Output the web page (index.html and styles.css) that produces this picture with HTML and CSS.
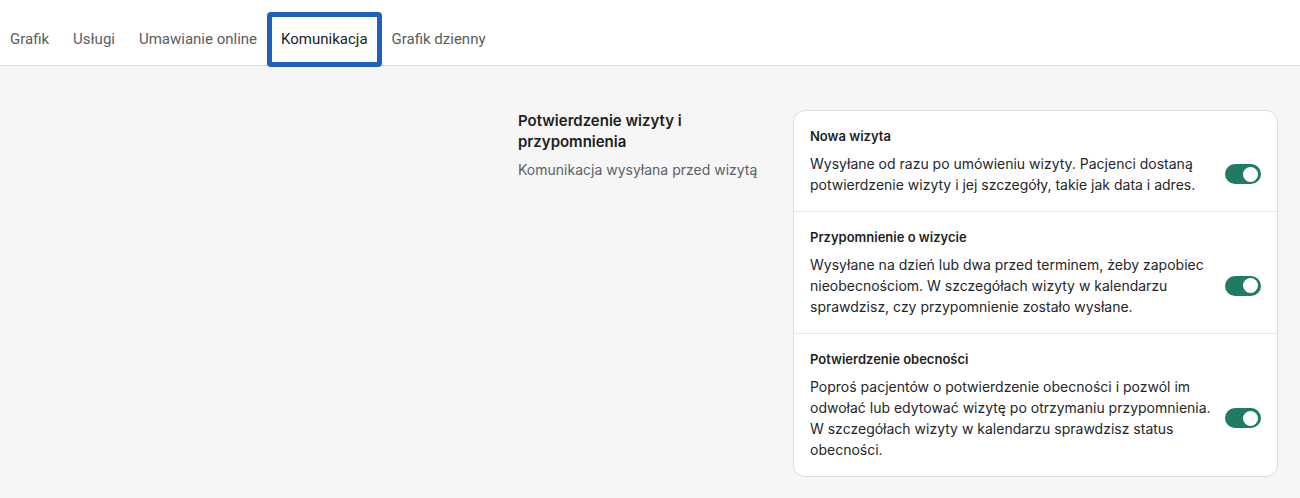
FILE: index.html
```html
<!DOCTYPE html>
<html lang="pl">
<head>
<meta charset="utf-8">
<title>Komunikacja</title>
<link rel="stylesheet" href="styles.css">
</head>
<body>
<header class="tabs">
  <a class="tab">Grafik</a>
  <a class="tab">Usługi</a>
  <a class="tab">Umawianie online</a>
  <a class="tab tab-active">Komunikacja<span class="highlight"></span></a>
  <a class="tab">Grafik dzienny</a>
</header>
<main class="content">
  <section class="intro">
    <h2 class="intro-title">Potwierdzenie wizyty i przypomnienia</h2>
    <p class="intro-sub">Komunikacja wysyłana przed wizytą</p>
  </section>
  <section class="card">
    <div class="row">
      <div class="row-text">
        <h3 class="row-title">Nowa wizyta</h3>
        <p class="row-desc">Wysyłane od razu po umówieniu wizyty. Pacjenci dostaną potwierdzenie wizyty i jej szczegóły, takie jak data i adres.</p>
      </div>
      <span class="toggle"><span class="knob"></span></span>
    </div>
    <div class="row">
      <div class="row-text">
        <h3 class="row-title">Przypomnienie o wizycie</h3>
        <p class="row-desc">Wysyłane na dzień lub dwa przed terminem, żeby zapobiec nieobecnościom. W szczegółach wizyty w kalendarzu sprawdzisz, czy przypomnienie zostało wysłane.</p>
      </div>
      <span class="toggle"><span class="knob"></span></span>
    </div>
    <div class="row">
      <div class="row-text">
        <h3 class="row-title">Potwierdzenie obecności</h3>
        <p class="row-desc">Poproś pacjentów o potwierdzenie obecności i pozwól im odwołać lub edytować wizytę po otrzymaniu przypomnienia. W szczegółach wizyty w kalendarzu sprawdzisz status obecności.</p>
      </div>
      <span class="toggle"><span class="knob"></span></span>
    </div>
  </section>
</main>
</body>
</html>
```
FILE: styles.css
```css
* { box-sizing: border-box; }
html, body { margin: 0; padding: 0; }
body {
  background: #f5f6f5;
  font-family: Inter, "Noto Sans", sans-serif;
  color: #1e1f1f;
  height: 498px;
  overflow: hidden;
}
.tabs {
  display: flex;
  align-items: center;
  gap: 24px;
  height: 66px;
  padding: 13px 0 0 10px;
  background: #fff;
  border-bottom: 1px solid #dcdedd;
  font-family: Roboto, "Liberation Sans", sans-serif;
  font-size: 15px;
}
.tab {
  color: #5a5c5e;
  position: relative;
  line-height: 20px;
  cursor: pointer;
}
.tab-active { color: #202124; }
.highlight {
  position: absolute;
  left: -14px;
  right: -14px;
  top: -17px;
  bottom: -18px;
  border: 5px solid #1f5fbf;
  border-radius: 4px;
}
.content {
  display: flex;
  justify-content: flex-end;
  gap: 19px;
  padding: 44px 22px 0 0;
}
.intro { width: 256px; }
.intro-title {
  margin: 0;
  font-size: 15px;
  font-weight: 600;
  line-height: 21px;
  color: #1c1d1d;
  padding-right: 20px;
}
.intro-sub {
  margin: 8px 0 0;
  font-size: 14px;
  line-height: 20px;
  color: #5d6165;
}
.card {
  width: 485px;
  background: #fff;
  border: 1px solid #dcdedd;
  border-radius: 12px;
}
.row {
  display: flex;
  align-items: center;
  gap: 12px;
  padding: 16px;
  border-top: 1px solid #e6e8e7;
}
.row:first-child { border-top: none; }
.row-text { flex: 1; }
.row-title {
  margin: 0;
  font-size: 13px;
  font-weight: 600;
  line-height: 18px;
  color: #1e1f1f;
}
.row-desc {
  margin: 8px 0 0;
  font-size: 14px;
  line-height: 21px;
  color: #25272a;
}
.toggle {
  flex: 0 0 36px;
  height: 20px;
  border-radius: 10px;
  background: #1f7a66;
  position: relative;
  margin-top: 26px;
}
.knob {
  position: absolute;
  right: 3px;
  top: 2.5px;
  width: 15px;
  height: 15px;
  border-radius: 50%;
  background: #fff;
}
```
